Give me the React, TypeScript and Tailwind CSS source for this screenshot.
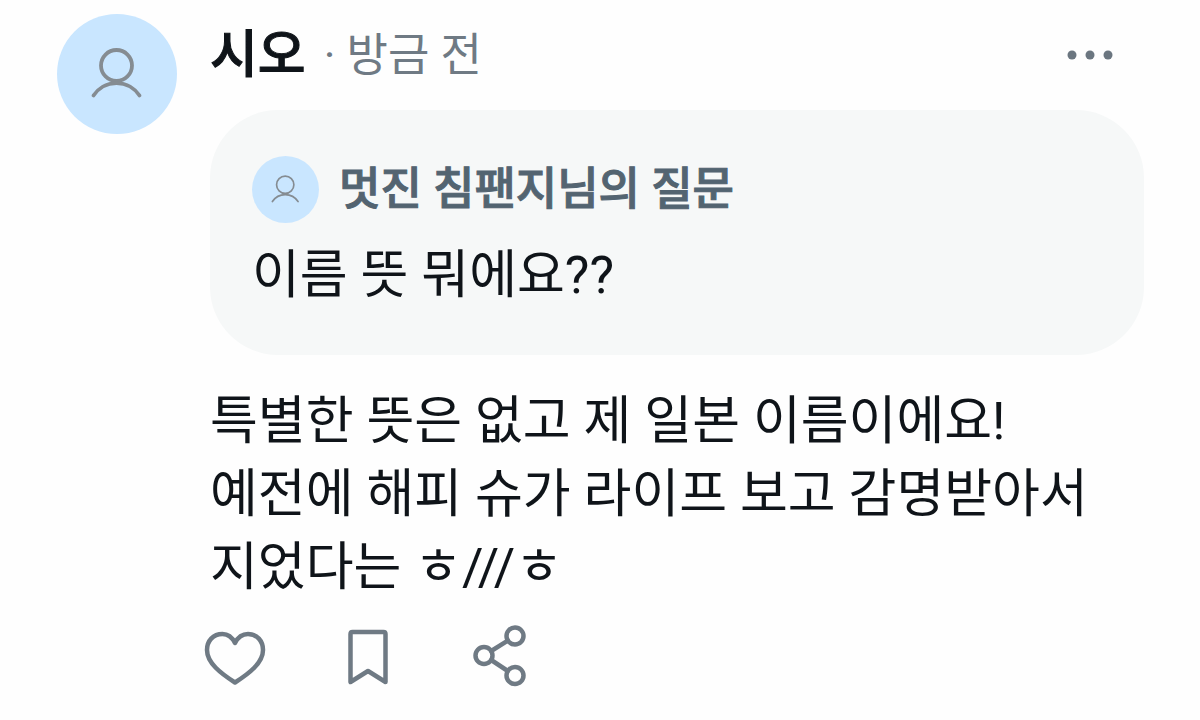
import React from 'react';
import clsx from 'clsx';

const actionIcons = [
  {
    label: '좋아요',
    shape: (
      <path d="M33 18C30 12 25.5 9 20.5 9C11 9 5 16 5 25C5 38 19 48.5 33 57.5C47 48.5 61 38 61 25C61 16 55 9 46 9C40.5 9 36 12 33 18Z" />
    ),
  },
  {
    label: '북마크',
    shape: <path d="M17.5 7H48.5Q50.5 7 50.5 9V57L33 46L15.5 57V9Q15.5 7 17.5 7Z" />,
  },
  {
    label: '공유',
    shape: (
      <>
        <circle cx="16" cy="30.5" r="8.5" />
        <circle cx="47" cy="11" r="8.5" />
        <circle cx="47" cy="50.5" r="8.5" />
        <path d="M23.2 26L39.8 15.6M23.2 35L39.8 46" />
      </>
    ),
  },
];

const Avatar: React.FC<{ className: string; strokeWidth: number }> = ({ className, strokeWidth }) => (
  <div className={clsx('shrink-0 rounded-full bg-[#c9e6ff]', className)}>
    <svg viewBox="0 0 120 120" fill="none" stroke="#858c92" strokeWidth={strokeWidth} strokeLinecap="round" aria-hidden="true">
      <circle cx="59.5" cy="51.5" r="15.5" />
      <path d="M36.5 81.5A27.5 27.5 0 0 1 82.5 81.5" />
    </svg>
  </div>
);

const App: React.FC = () => {
  return (
    <main className="min-h-screen bg-[#fefefe] font-[Roboto,'Noto_Sans_CJK_KR',sans-serif] text-[#0f1419]">
      <article className="flex items-start gap-[33px] pt-3.5 pr-14 pl-[57px]">
        <Avatar className="size-[120px]" strokeWidth={3.8} />

        <div className="min-w-0 flex-1">
          {/* Author row */}
          <header className="flex h-20 items-center pt-1">
            <h1 className="text-[52px] leading-[80px] font-medium [-webkit-text-stroke:1px]">시오</h1>
            <span className="ml-[18px] text-[45px] leading-[80px] text-[#6f7a84]">· 방금 전</span>
            <button type="button" aria-label="더보기" className="mr-[30px] ml-auto">
              <svg className="h-12 w-12" viewBox="0 0 48 48" fill="#6b7680">
                <circle cx="6" cy="23" r="4.5" />
                <circle cx="24" cy="23" r="4.5" />
                <circle cx="42" cy="23" r="4.5" />
              </svg>
            </button>
          </header>

          {/* Quoted question */}
          <section className="mt-4 rounded-[68px] bg-[#f6f8f8] px-[42px] pt-[46px] pb-[43px]">
            <div className="flex items-center gap-5">
              <Avatar className="size-[67px]" strokeWidth={3} />
              <h2 className="text-[45px] leading-[67px] font-medium text-[#536471] [-webkit-text-stroke:1px]">멋진 침팬지님의 질문</h2>
            </div>
            <p className="mt-4 text-[52px] leading-[73px]">이름 뜻 뭐에요??</p>
          </section>

          <p className="mt-[30px] text-[52px] leading-[73px] break-keep">
            특별한 뜻은 없고 제 일본 이름이에요!
            <br />
            예전에 해피 슈가 라이프 보고 감명받아서 지었다는 ㅎ///ㅎ
          </p>

          <div className="mt-[21px] -ml-2 flex gap-[69px]">
            {actionIcons.map(({ label, shape }) => (
              <button key={label} type="button" aria-label={label}>
                <svg className="size-16" viewBox="0 0 64 64" fill="none" stroke="#6f7a84" strokeWidth="4.5" strokeLinecap="round" strokeLinejoin="round">
                  {shape}
                </svg>
              </button>
            ))}
          </div>
        </div>
      </article>
    </main>
  );
};

export default App;
